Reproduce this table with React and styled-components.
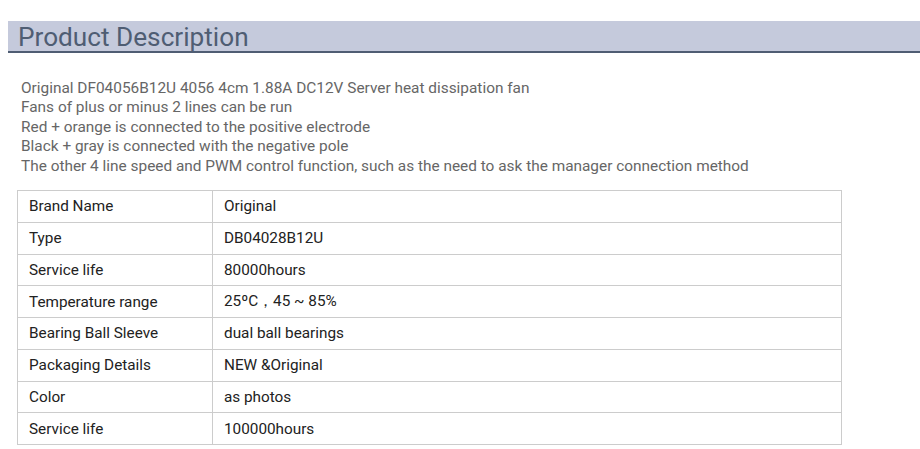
import styled, { createGlobalStyle } from "styled-components";

const GlobalStyle = createGlobalStyle`
  body {
    margin: 0;
    background: #fff;
    font-family: Roboto, "Liberation Sans", sans-serif;
  }
`;

const Page = styled.div`
  padding: 21px 0 0 8px;
`;

const Heading = styled.h2`
  margin: 0;
  height: 30px;
  padding-left: 10px;
  background: #c5cadc;
  border-bottom: 2px solid #4f5d73;
  color: #4f5d73;
  font-size: 26.2px;
  font-weight: 400;
  line-height: 32px;
`;

const Intro = styled.div`
  margin: 26px 0 0 13px;
  color: #666;
  font-size: 15.4px;
  line-height: 19.4px;
`;

const SpecTable = styled.table`
  margin: 14px 0 0 9px;
  width: 825px;
  border-collapse: collapse;
  color: #222;
  font-size: 15.3px;
`;

const Cell = styled.td`
  height: 30.75px;
  padding: 0 11px;
  border: 1px solid #cccccc;
  width: ${(p) => (p.$label ? "172px" : "auto")};
`;

const specs = [
  ["Brand Name", "Original"],
  ["Type", "DB04028B12U"],
  ["Service life", "80000hours"],
  ["Temperature range", "25ºC，45 ~ 85%"],
  ["Bearing Ball Sleeve", "dual ball bearings"],
  ["Packaging Details", "NEW &Original"],
  ["Color", "as photos"],
  ["Service life", "100000hours"],
];

export default function App() {
  return (
    <>
      <GlobalStyle />
      <Page>
        <Heading>Product Description</Heading>
        <Intro>
          Original DF04056B12U 4056 4cm 1.88A DC12V Server heat dissipation fan
          <br />
          Fans of plus or minus 2 lines can be run
          <br />
          Red + orange is connected to the positive electrode
          <br />
          Black + gray is connected with the negative pole
          <br />
          The other 4 line speed and PWM control function, such as the need to
          ask the manager connection method
        </Intro>
        <SpecTable>
          <tbody>
            {specs.map(([label, value], i) => (
              <tr key={i}>
                <Cell $label>{label}</Cell>
                <Cell>{value}</Cell>
              </tr>
            ))}
          </tbody>
        </SpecTable>
      </Page>
    </>
  );
}
